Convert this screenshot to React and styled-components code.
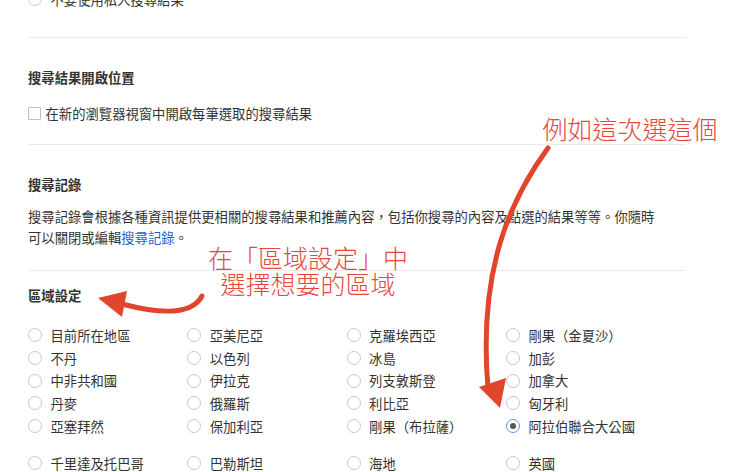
import React from "react";
import styled, { createGlobalStyle } from "styled-components";

const Global = createGlobalStyle`
  html, body { margin: 0; padding: 0; background: #fff; }
  body { overflow: hidden; }
  * { box-sizing: border-box; }
`;

const FONT = `"Noto Sans CJK TC", "Noto Sans", sans-serif`;

const Screen = styled.div`
  position: relative;
  width: 751px;
  height: 472px;
  overflow: hidden;
  font-family: ${FONT};
  font-size: 13.33px;
  color: #333;
`;

const Content = styled.div`
  width: 686px;
  padding-left: 28px;
  margin-top: -12px;
  display: flex;
  flex-direction: column;
`;

const Section = styled.section`
  display: flex;
  flex-direction: column;
  gap: ${(p) => p.$gap || 0}px;
  padding-top: ${(p) => p.$top || 0}px;
  padding-bottom: ${(p) => p.$bottom || 0}px;
`;

const Divider = styled.hr`
  margin: 0;
  border: 0;
  height: 1px;
  background: #ebebeb;
`;

const Heading = styled.h3`
  margin: 0;
  font-size: 13.33px;
  line-height: 20px;
  font-weight: 700;
  color: #333;
`;

const Paragraph = styled.p`
  margin: 0;
  max-width: 634px;
  line-height: 21px;
`;

const Link = styled.a`
  color: #1a5fd6;
  text-decoration: none;
`;

const OptionRow = styled.label`
  display: flex;
  align-items: center;
  height: ${(p) => p.$h || 22.7}px;
  white-space: nowrap;
`;

const Radio = styled.span`
  flex: none;
  position: relative;
  width: 14px;
  height: 14px;
  border-radius: 50%;
  border: 1px solid ${(p) => (p.$checked ? "#5c95f0" : "#c8c8c8")};
  margin-right: 8.5px;
  background: #fff;
  &::after {
    content: "";
    display: ${(p) => (p.$checked ? "block" : "none")};
    position: absolute;
    left: 3px;
    top: 3px;
    width: 6px;
    height: 6px;
    border-radius: 50%;
    background: #555;
  }
`;

const Checkbox = styled.span`
  flex: none;
  width: 13px;
  height: 13px;
  border: 1px solid #c0c0c0;
  border-radius: 1px;
  margin-right: 4.5px;
  background: #fff;
`;

const RegionGroup = styled.div`
  display: grid;
  grid-template-columns: repeat(4, 159.3px);
  grid-template-rows: repeat(${(p) => p.$rows}, 22.7px);
  grid-auto-flow: column;
  margin-bottom: ${(p) => p.$after || 0}px;
`;

const Note = styled.div`
  position: absolute;
  left: ${(p) => p.$x}px;
  top: ${(p) => p.$y}px;
  width: ${(p) => p.$w}px;
  font-family: ${FONT};
  font-size: 25px;
  font-weight: 300;
  line-height: 26px;
  color: #e6463c;
  text-align: center;
  white-space: nowrap;
`;

const Overlay = styled.svg`
  position: absolute;
  left: 0;
  top: 0;
  pointer-events: none;
`;

const group1 = [
  "目前所在地區", "不丹", "中非共和國", "丹麥", "亞塞拜然",
  "亞美尼亞", "以色列", "伊拉克", "俄羅斯", "保加利亞",
  "克羅埃西亞", "冰島", "列支敦斯登", "利比亞", "剛果（布拉薩）",
  "剛果（金夏沙）", "加彭", "加拿大", "匈牙利", "阿拉伯聯合大公國",
];
const group2 = ["千里達及托巴哥", "巴勒斯坦", "海地", "英國"];
const SELECTED = "阿拉伯聯合大公國";

function RegionOption({ name }) {
  return (
    <OptionRow>
      <Radio $checked={name === SELECTED} />
      {name}
    </OptionRow>
  );
}

export default function App() {
  return (
    <>
      <Global />
      <Screen>
        <Content>
          <Section $bottom={26.3}>
            <OptionRow>
              <Radio />
              不要使用私人搜尋結果
            </OptionRow>
          </Section>
          <Divider />
          <Section $top={30} $bottom={20} $gap={16}>
            <Heading>搜尋結果開啟位置</Heading>
            <OptionRow $h={20}>
              <Checkbox />
              在新的瀏覽器視窗中開啟每筆選取的搜尋結果
            </OptionRow>
          </Section>
          <Divider />
          <Section $top={30} $bottom={21.5} $gap={11.5}>
            <Heading>搜尋記錄</Heading>
            <Paragraph>
              搜尋記錄會根據各種資訊提供更相關的搜尋結果和推薦內容，包括你搜尋的內容及點選的結果等等。你隨時可以關閉或編輯
              <Link href="#">搜尋記錄</Link>。
            </Paragraph>
          </Section>
          <Divider />
          <Section $top={15} $gap={18}>
            <Heading>區域設定</Heading>
            <div>
              <RegionGroup $rows={5} $after={14.6}>
                {group1.map((n) => (
                  <RegionOption key={n} name={n} />
                ))}
              </RegionGroup>
              <RegionGroup $rows={1}>
                {group2.map((n) => (
                  <RegionOption key={n} name={n} />
                ))}
              </RegionGroup>
            </div>
          </Section>
        </Content>

        <Note $x={540} $y={115} $w={180}>例如這次選這個</Note>
        <Note $x={208} $y={244} $w={200}>
          在「區域設定」中
          <br />
          選擇想要的區域
        </Note>

        <Overlay width="751" height="472" viewBox="0 0 751 472">
          <g fill="none" stroke="#e1452b" strokeWidth="5" strokeLinecap="round">
            <path d="M548 148 C 510 200 478 270 488 388" />
            <path d="M202 296 C 192 315 160 314 122 304" />
          </g>
          <g fill="#e1452b">
            <polygon points="479,387 506,378 500,408" />
            <polygon points="98,298 127,291 122,317" />
          </g>
        </Overlay>
      </Screen>
    </>
  );
}
